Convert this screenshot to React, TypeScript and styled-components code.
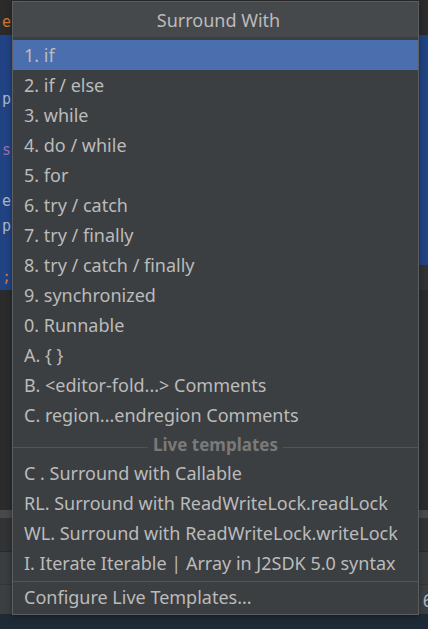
import React from 'react';
import styled, { createGlobalStyle } from 'styled-components';

const Colors = {
	EDITOR: '#2b2b2b',
	SELECTION: '#214283',
	CARET_LINE: '#323232',
	POPUP: '#3c3f41',
	TITLE: '#46494b',
	BORDER: '#5b5e60',
	ACTIVE: '#4b6eaf',
	TEXT: '#bbbbbb',
	MUTED: '#7a7a7a',
	DIVIDER: '#515457',
};

const GlobalStyle = createGlobalStyle`
	html, body {
		margin: 0;
		padding: 0;
		background: ${Colors.EDITOR};
	}
	* {
		box-sizing: border-box;
	}
`;

type CodeLine = { text: string; color?: string; selected?: boolean; partial?: boolean };

const codeLines: CodeLine[] = [
	{ text: 'e', color: '#cc7832' },
	{ text: '', selected: true },
	{ text: '', selected: true },
	{ text: 'p', selected: true },
	{ text: '', selected: true },
	{ text: 's', color: '#9876aa', selected: true },
	{ text: '', selected: true },
	{ text: 'e', selected: true },
	{ text: 'p', selected: true },
	{ text: '', selected: true },
	{ text: ';', color: '#cc7832', partial: true },
];

const mainItems = [
	'1. if',
	'2. if / else',
	'3. while',
	'4. do / while',
	'5. for',
	'6. try / catch',
	'7. try / finally',
	'8. try / catch / finally',
	'9. synchronized',
	'0. Runnable',
	'A. { }',
	'B. <editor-fold...> Comments',
	'C. region...endregion Comments',
];

const liveItems = [
	'C . Surround with Callable',
	'RL. Surround with ReadWriteLock.readLock',
	'WL. Surround with ReadWriteLock.writeLock',
	'I. Iterate Iterable | Array in J2SDK 5.0 syntax',
];

export default function App() {
	return (
		<Screen>
			<GlobalStyle />
			<Editor>
				{codeLines.map((line, i) => (
					<Line key={i} $selected={line.selected} $partial={line.partial}>
						<Code $color={line.color} $selected={line.selected || line.partial}>
							{line.text}
						</Code>
					</Line>
				))}
			</Editor>
			<ToolStrip />
			<ToolPanel />
			<ToolPanelLight />
			<StatusBar>
				<StatusText>6</StatusText>
			</StatusBar>
			<Taskbar />

			<Popup>
				<Title>Surround With</Title>
				<List>
					{mainItems.map((item, i) => (
						<Item key={item} $active={i === 0}>
							{item}
						</Item>
					))}
					<GroupSeparator>
						<SeparatorLine />
						<GroupLabel>Live templates</GroupLabel>
						<SeparatorLine />
					</GroupSeparator>
					{liveItems.map((item) => (
						<Item key={item}>{item}</Item>
					))}
				</List>
				<Footer>
					<Item>Configure Live Templates...</Item>
				</Footer>
			</Popup>
		</Screen>
	);
}

const Screen = styled.div`
	position: relative;
	width: 428px;
	height: 629px;
	overflow: hidden;
	display: flex;
	flex-direction: column;
	background: ${Colors.EDITOR};
`;

const Editor = styled.div`
	height: 510px;
	padding-top: 9.5px;
	background: ${Colors.EDITOR};
	display: flex;
	flex-direction: column;
`;

const Line = styled.div<{ $selected?: boolean; $partial?: boolean }>`
	height: 25.5px;
	display: flex;
	align-items: center;
	background: ${(p) =>
		p.$selected ? Colors.SELECTION : p.$partial ? Colors.CARET_LINE : 'transparent'};
`;

const Code = styled.span<{ $color?: string; $selected?: boolean }>`
	display: flex;
	align-items: center;
	height: 100%;
	width: ${(p) => (p.$selected ? '60px' : 'auto')};
	padding-left: 2px;
	background: ${(p) => (p.$selected ? Colors.SELECTION : 'transparent')};
	font-family: 'DejaVu Sans Mono', monospace;
	font-size: 15px;
	color: ${(p) => p.$color || '#a9b7c6'};
`;

const ToolStrip = styled.div`
	height: 8px;
	background: #47494b;
`;

const ToolPanel = styled.div`
	height: 34px;
	background: #313335;
	border-bottom: 1px solid #2b2b2b;
`;

const ToolPanelLight = styled.div`
	height: 33px;
	background: #3a3d3f;
	border-bottom: 1px solid #323436;
`;

const StatusBar = styled.div`
	height: 29px;
	background: #3c3f41;
	display: flex;
	justify-content: flex-end;
	align-items: center;
`;

const StatusText = styled.span`
	font-family: 'Noto Sans', sans-serif;
	font-size: 18px;
	color: #a9b7c6;
	margin-right: -5px;
`;

const Taskbar = styled.div`
	flex: 1;
	background: #1e2b36;
`;

const Popup = styled.div`
	position: absolute;
	top: 1px;
	left: 12px;
	width: 407px;
	border: 1px solid ${Colors.BORDER};
	background: ${Colors.POPUP};
	display: flex;
	flex-direction: column;
	font-family: 'Noto Sans', 'Open Sans', sans-serif;
	box-shadow: 0 2px 6px rgba(0, 0, 0, 0.35);
`;

const Title = styled.div`
	height: 35px;
	background: ${Colors.TITLE};
	display: flex;
	align-items: center;
	justify-content: center;
	padding-left: 6px;
	font-size: 18px;
	color: ${Colors.TEXT};
`;

const List = styled.div`
	padding: 3px 0;
	display: flex;
	flex-direction: column;
`;

const Item = styled.div<{ $active?: boolean }>`
	height: 30px;
	display: flex;
	align-items: center;
	padding-left: 11px;
	font-size: 18px;
	white-space: nowrap;
	color: ${Colors.TEXT};
	background: ${(p) => (p.$active ? Colors.ACTIVE : 'transparent')};
`;

const GroupSeparator = styled.div`
	height: 28px;
	display: flex;
	align-items: center;
	gap: 5px;
`;

const SeparatorLine = styled.div`
	flex: 1;
	height: 1px;
	margin-top: 7px;
	background: ${Colors.DIVIDER};
`;

const GroupLabel = styled.span`
	font-size: 17px;
	font-weight: 700;
	color: ${Colors.MUTED};
`;

const Footer = styled.div`
	border-top: 1px solid ${Colors.DIVIDER};
	padding-bottom: 2px;
`;
